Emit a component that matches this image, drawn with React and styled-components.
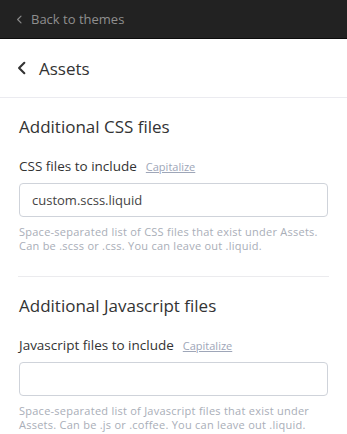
import styled, { createGlobalStyle } from "styled-components"

const Global = createGlobalStyle`
    body {
        margin: 0;
        background: #ffffff;
        font-family: "Open Sans", Lato, sans-serif;
        color: #333333;
    }
`

const sections = [
    {
        titulo: "Additional CSS files",
        rotulo: "CSS files to include",
        valor: "custom.scss.liquid",
        ajuda: "Space-separated list of CSS files that exist under Assets. Can be .scss or .css. You can leave out .liquid.",
    },
    {
        titulo: "Additional Javascript files",
        rotulo: "Javascript files to include",
        valor: "",
        ajuda: "Space-separated list of Javascript files that exist under Assets. Can be .js or .coffee. You can leave out .liquid.",
    },
]

function Chevron({ size, stroke, color }) {
    return (
        <svg width={size} height={size} viewBox="0 0 12 12" fill="none">
            <path d="M8 1.5 L3.5 6 L8 10.5" stroke={color} strokeWidth={stroke} strokeLinecap="round" strokeLinejoin="round" />
        </svg>
    )
}

export default function App() {
    return (
        <Tela>
            <Global />
            <BarraTopo>
                <Chevron size={9} stroke={1.6} color="#8a8a8a" />
                <span>Back to themes</span>
            </BarraTopo>
            <Cabecalho>
                <Chevron size={14} stroke={1.8} color="#333333" />
                <span>Assets</span>
            </Cabecalho>
            {sections.map((s, i) => (
                <Secao key={i} ultima={i === sections.length - 1}>
                    <Titulo>{s.titulo}</Titulo>
                    <Rotulo>
                        {s.rotulo}
                        <Capitalizar>Capitalize</Capitalizar>
                    </Rotulo>
                    <Campo type="text" defaultValue={s.valor} />
                    <Ajuda>{s.ajuda}</Ajuda>
                </Secao>
            ))}
        </Tela>
    )
}

const Tela = styled.div`
    width: 347px;
    height: 434px;
    overflow: hidden;
    background: #ffffff;
`
const BarraTopo = styled.div`
    height: 38px;
    background: #222222;
    border-bottom: 1px solid #0c0c0c;
    display: flex;
    align-items: center;
    gap: 7px;
    padding-left: 15px;
    font-size: 13px;
    color: #8f8f8f;
`
const Cabecalho = styled.div`
    height: 58px;
    border-bottom: 1px solid #ebebf0;
    display: flex;
    align-items: center;
    gap: 10px;
    padding-left: 15px;
    font-size: 17px;
    color: #333333;
`
const Secao = styled.div`
    margin: 0 18px;
    padding: 18px 1px ${(props) => (props.ultima ? "4px" : "23px")};
    border-bottom: ${(props) => (props.ultima ? "none" : "1px solid #ebebee")};
`
const Titulo = styled.div`
    font-size: 17px;
    line-height: 22px;
    color: #333333;
    margin-bottom: 20px;
`
const Rotulo = styled.div`
    font-size: 13.5px;
    line-height: 16px;
    color: #333333;
    display: flex;
    align-items: baseline;
    gap: 9px;
    margin-bottom: 8px;
`
const Capitalizar = styled.span`
    font-size: 11px;
    color: #9ea6b8;
    text-decoration: underline;
`
const Campo = styled.input`
    box-sizing: border-box;
    display: block;
    width: 309px;
    height: 34px;
    border: 1px solid #cfd3da;
    border-radius: 4px;
    padding: 0 12px;
    font-family: "Open Sans", Lato, sans-serif;
    font-size: 13px;
    color: #444444;
    outline: none;
`
const Ajuda = styled.div`
    font-size: 11px;
    line-height: 14px;
    letter-spacing: 0.25px;
    color: #a9aeb8;
    margin-top: 8px;
`
